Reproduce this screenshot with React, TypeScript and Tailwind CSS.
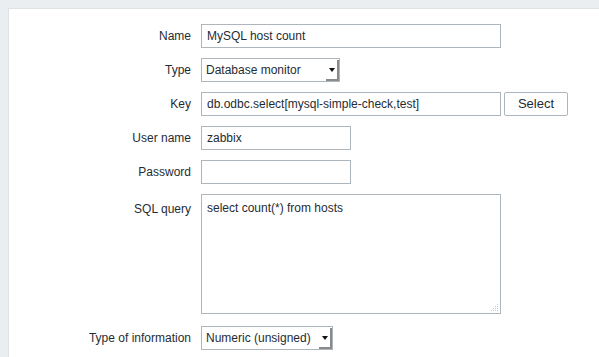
const font = "font-['Liberation_Sans',Arial,sans-serif]"

function Row({ label, children, top = false }: { label: string; children: React.ReactNode; top?: boolean }) {
  return (
    <div className={`flex gap-[10px] ${top ? "items-start" : "items-center"}`}>
      <div className={`w-[182px] text-right text-[12px] text-[#1f2c33] ${top ? "pt-[6px]" : ""}`}>{label}</div>
      <div className="flex items-center gap-[3px]">{children}</div>
    </div>
  )
}

function TextBox({ value, width }: { value: string; width: string }) {
  return (
    <div className={`${width} h-[24px] border border-[#acb6bc] bg-white px-[5px] flex items-center text-[12px] text-[#1f2c33]`}>
      {value}
    </div>
  )
}

function Select({ value, width }: { value: string; width: string }) {
  return (
    <div className={`${width} h-[24px] border border-[#acb6bc] bg-white flex items-center text-[12px] text-[#1f2c33]`}>
      <span className="flex-1 pl-[4px]">{value}</span>
      <div className="w-[13px] h-[21px] mt-[1px] border-r-2 border-b-2 border-[#8a8a8a] flex items-center justify-center">
        <svg width="6" height="4" viewBox="0 0 6 4">
          <path d="M0 0H6L3 4Z" fill="#111" />
        </svg>
      </div>
    </div>
  )
}

export default function App() {
  return (
    <div className={`w-[599px] h-[357px] bg-[#ebeef0] pl-[8px] pt-[8px] overflow-hidden ${font}`}>
      <div className="h-full border-l border-t border-[#dde2e5] bg-white pt-[15px] flex flex-col gap-[10px]">
        <Row label="Name">
          <TextBox value="MySQL host count" width="w-[300px]" />
        </Row>
        <Row label="Type">
          <Select value="Database monitor" width="w-[139px]" />
        </Row>
        <Row label="Key">
          <TextBox value="db.odbc.select[mysql-simple-check,test]" width="w-[300px]" />
          <button className="h-[24px] w-[64px] border border-[#acb6bc] rounded-[2px] bg-white text-[13px] text-[#1f2c33]">
            Select
          </button>
        </Row>
        <Row label="User name">
          <TextBox value="zabbix" width="w-[150px]" />
        </Row>
        <Row label="Password">
          <TextBox value="" width="w-[150px]" />
        </Row>
        <Row label="SQL query" top>
          <div className="relative w-[300px] h-[120px] border border-[#acb6bc] bg-white px-[5px] pt-[6px] text-[12px] text-[#1f2c33] leading-[14px]">
            select count(*) from hosts
            <svg className="absolute right-[1px] bottom-[1px]" width="8" height="8" viewBox="0 0 8 8">
              <rect x="6" y="0" width="1" height="1" fill="#c8c8c8" />
              <rect x="4" y="2" width="1" height="1" fill="#c8c8c8" />
              <rect x="6" y="2" width="1" height="1" fill="#c8c8c8" />
              <rect x="2" y="4" width="1" height="1" fill="#c8c8c8" />
              <rect x="4" y="4" width="1" height="1" fill="#c8c8c8" />
              <rect x="6" y="4" width="1" height="1" fill="#c8c8c8" />
              <rect x="0" y="6" width="1" height="1" fill="#c8c8c8" />
              <rect x="2" y="6" width="1" height="1" fill="#c8c8c8" />
              <rect x="4" y="6" width="1" height="1" fill="#c8c8c8" />
              <rect x="6" y="6" width="1" height="1" fill="#c8c8c8" />
            </svg>
          </div>
        </Row>
        <div className="mt-[2px]">
          <Row label="Type of information">
            <Select value="Numeric (unsigned)" width="w-[132px]" />
          </Row>
        </div>
      </div>
    </div>
  )
}
